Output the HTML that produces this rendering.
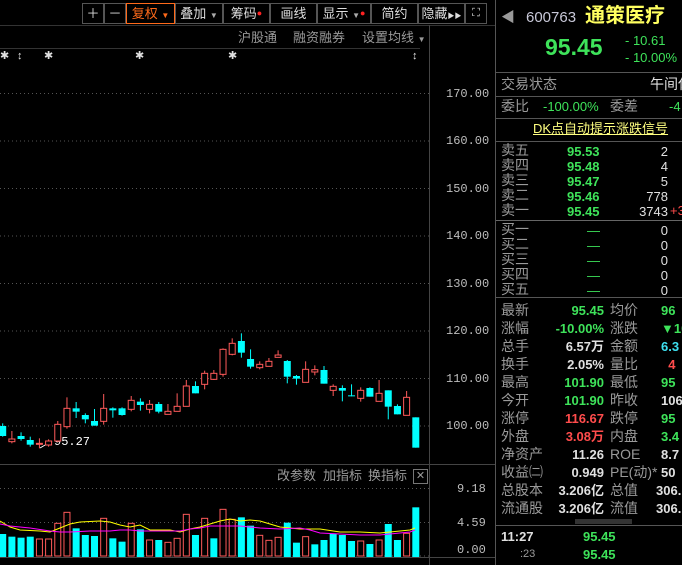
<!DOCTYPE html>
<html><head><meta charset="utf-8"><style>
*{margin:0;padding:0;box-sizing:border-box}
body{width:682px;height:565px;background:#000;overflow:hidden;position:relative;font-family:"Liberation Sans","Noto Sans CJK SC",sans-serif;color:#bdbdbd}
.a{position:absolute;white-space:nowrap;line-height:1}
.g{color:#3ee35a}.r{color:#ff4c4c}.w{color:#e0e0e0}.gy{color:#9a9a9a}
.hl{position:absolute;height:1px;background:#444}
.tb{position:absolute;top:3px;height:21px;border:1px solid #555;font-size:13px;color:#ddd;text-align:center;line-height:19px;white-space:nowrap;overflow:hidden}
</style></head><body>
<!-- toolbar -->
<div class="tb" style="left:82px;width:22px">＋</div>
<div class="tb" style="left:104px;width:22px">－</div>
<div class="tb" style="left:126px;width:49px;border-color:#ff6a1a;color:#ff6a1a">复权 <span style="font-size:8px">▼</span></div>
<div class="tb" style="left:175px;width:48px">叠加 <span style="font-size:8px;color:#aaa">▼</span></div>
<div class="tb" style="left:223px;width:47px">筹码<span style="color:#f22;font-size:9px;vertical-align:top">●</span></div>
<div class="tb" style="left:270px;width:47px">画线</div>
<div class="tb" style="left:317px;width:54px">显示 <span style="font-size:8px;color:#aaa">▼</span><span style="color:#f22;font-size:9px;vertical-align:top">●</span></div>
<div class="tb" style="left:371px;width:47px">简约</div>
<div class="tb" style="left:418px;width:47px">隐藏<span style="font-size:7px">▶▶</span></div>
<div class="tb" style="left:465px;width:22px;font-size:11px">⛶</div>
<div class="hl" style="left:0;top:25px;width:496px;background:#333"></div>
<div class="a gy" style="left:238px;top:31px;font-size:13px">沪股通</div>
<div class="a gy" style="left:293px;top:31px;font-size:13px">融资融券</div>
<div class="a gy" style="left:362px;top:31px;font-size:13px">设置均线 <span style="font-size:8px">▼</span></div>
<div class="hl" style="left:0;top:48px;width:420px;background:#333"></div>
<div class="a w" style="left:0;top:51px;font-size:11px">✱</div>
<div class="a w" style="left:17px;top:51px;font-size:11px">↕</div>
<div class="a w" style="left:44px;top:51px;font-size:11px">✱</div>
<div class="a w" style="left:135px;top:51px;font-size:11px">✱</div>
<div class="a w" style="left:228px;top:51px;font-size:11px">✱</div>
<div class="a w" style="left:412px;top:51px;font-size:11px">↕</div>
<svg width="682" height="565" style="position:absolute;left:0;top:0" id="sv">
<line x1="429.5" y1="25" x2="429.5" y2="565" stroke="#444"/>
<line x1="0" y1="464.5" x2="496" y2="464.5" stroke="#444"/>
<line x1="0" y1="557.5" x2="496" y2="557.5" stroke="#444"/>
<g stroke="#555" stroke-dasharray="1,3">
<line x1="0" y1="93.5" x2="429" y2="93.5"/><line x1="0" y1="141" x2="429" y2="141"/><line x1="0" y1="188.5" x2="429" y2="188.5"/><line x1="0" y1="236" x2="429" y2="236"/><line x1="0" y1="283.5" x2="429" y2="283.5"/><line x1="0" y1="331" x2="429" y2="331"/><line x1="0" y1="378.5" x2="429" y2="378.5"/><line x1="0" y1="426" x2="429" y2="426"/>
<line x1="0" y1="488.5" x2="429" y2="488.5"/><line x1="0" y1="522.5" x2="429" y2="522.5"/><line x1="0" y1="556" x2="429" y2="556"/>
</g>
<g font-family="Liberation Mono,monospace" font-size="12" fill="#bdbdbd">
<text x="446" y="97">170.00</text><text x="446" y="144">160.00</text><text x="446" y="192">150.00</text><text x="446" y="239">140.00</text><text x="446" y="287">130.00</text><text x="446" y="334">120.00</text><text x="446" y="382">110.00</text><text x="446" y="429">100.00</text>
<text x="457" y="492">9.18</text><text x="457" y="526">4.59</text><text x="457" y="553">0.00</text>
<text x="54" y="445" fill="#fff">95.27</text>
</g>
<line x1="40" y1="448" x2="52" y2="441" stroke="#fff"/>
<g id="c"></g>
</svg>
<div class="a gy" style="left:277px;top:469px;font-size:13px">改参数</div>
<div class="a gy" style="left:323px;top:469px;font-size:13px">加指标</div>
<div class="a gy" style="left:368px;top:469px;font-size:13px">换指标</div>
<div class="a gy" style="left:413px;top:469px;width:15px;height:15px;border:1px solid #777;font-size:11px;text-align:center;line-height:13px">✕</div>
<!-- right panel -->
<div style="position:absolute;left:495px;top:0;width:1px;height:565px;background:#555"></div>
<div class="a gy" style="left:501px;top:10px;font-size:14px">◀</div>
<div class="a" style="left:526px;top:10px;font-size:15px;color:#c8c8d8">600763</div>
<div class="a" style="left:585px;top:6px;font-size:20px;font-weight:bold;color:#ffff60">通策医疗</div>
<div class="a g" style="left:545px;top:36px;font-size:23px;font-weight:bold">95.45</div>
<div class="a g" style="left:625px;top:34px;font-size:13px">- 10.61</div>
<div class="a g" style="left:625px;top:51px;font-size:13px">- 10.00%</div>
<div class="hl" style="left:496px;top:72px;width:186px;background:#555"></div>
<div class="a gy" style="left:501px;top:77px;font-size:14px">交易状态</div>
<div class="a w" style="left:650px;top:77px;font-size:14px">午间休</div>
<div class="hl" style="left:496px;top:96px;width:186px;background:#555"></div>
<div class="a gy" style="left:501px;top:99px;font-size:14px">委比</div>
<div class="a g" style="left:543px;top:100px;font-size:13px">-100.00%</div>
<div class="a gy" style="left:610px;top:99px;font-size:14px">委差</div>
<div class="a g" style="left:669px;top:100px;font-size:13px">-4</div>
<div class="hl" style="left:496px;top:118px;width:186px;background:#555"></div>
<div class="a" style="left:533px;top:122px;font-size:13px;color:#ffff80;text-decoration:underline">DK点自动提示涨跌信号</div>
<div class="hl" style="left:496px;top:141px;width:186px;background:#555"></div>
<div style="position:absolute;left:501px;top:143px;font-size:14px;line-height:15px" class="gy">卖五<br>卖四<br>卖三<br>卖二<br>卖一</div>
<div style="position:absolute;left:567px;top:144px;font-size:13px;line-height:15px;font-weight:bold" class="g">95.53<br>95.48<br>95.47<br>95.46<br>95.45</div>
<div style="position:absolute;left:630px;top:144px;width:38px;text-align:right;font-size:13px;line-height:15px" class="w">2<br>4<br>5<br>778<br>3743</div>
<div class="a r" style="left:670px;top:204px;font-size:13px">+3</div>
<div class="hl" style="left:496px;top:220px;width:186px;background:#666"></div>
<div style="position:absolute;left:501px;top:222px;font-size:14px;line-height:15px" class="gy">买一<br>买二<br>买三<br>买四<br>买五</div>
<div style="position:absolute;left:587px;top:223px;font-size:13px;line-height:15px" class="g">—<br>—<br>—<br>—<br>—</div>
<div style="position:absolute;left:630px;top:223px;width:38px;text-align:right;font-size:13px;line-height:15px" class="w">0<br>0<br>0<br>0<br>0</div>
<div class="hl" style="left:496px;top:297px;width:186px;background:#555"></div>
<div style="position:absolute;left:501px;top:301px;font-size:14px;line-height:18px" class="gy">最新<br>涨幅<br>总手<br>换手<br>最高<br>今开<br>涨停<br>外盘<br>净资产<br>收益㈡<br>总股本<br>流通股</div>
<div style="position:absolute;left:530px;top:302px;width:74px;text-align:right;font-size:13px;line-height:18px;font-weight:bold">
<span class="g">95.45</span><br><span class="g">-10.00%</span><br><span class="w">6.57万</span><br><span class="w">2.05%</span><br><span class="g">101.90</span><br><span class="g">101.90</span><br><span class="r">116.67</span><br><span class="r">3.08万</span><br><span class="w">11.26</span><br><span class="w">0.949</span><br><span class="w">3.206亿</span><br><span class="w">3.206亿</span></div>
<div style="position:absolute;left:610px;top:301px;font-size:14px;line-height:18px" class="gy">均价<br>涨跌<br>金额<br>量比<br>最低<br>昨收<br>跌停<br>内盘<br>ROE<br>PE(动)*<br>总值<br>流值</div>
<div style="position:absolute;left:661px;top:302px;font-size:13px;line-height:18px;font-weight:bold;white-space:nowrap">
<span class="g">96</span><br><span class="g">▼10</span><br><span style="color:#3ee0f0">6.3</span><br><span class="r">&nbsp;&nbsp;4</span><br><span class="g">95</span><br><span class="w">106</span><br><span class="g">95</span><br><span class="g">3.4</span><br><span class="w">8.7</span><br><span class="w">50</span><br><span class="w" style="margin-left:-5px">306.</span><br><span class="w" style="margin-left:-5px">306.</span></div>
<div style="position:absolute;left:575px;top:519px;width:57px;height:5px;background:#333"></div>
<div class="hl" style="left:496px;top:525px;width:186px;background:#555"></div>
<div class="a w" style="left:501px;top:530px;font-size:13px;font-weight:bold">11:27</div>
<div class="a g" style="left:583px;top:530px;font-size:13px;font-weight:bold">95.45</div>
<div class="a gy" style="left:520px;top:549px;font-size:11px">:23</div>
<div class="a g" style="left:583px;top:548px;font-size:13px;font-weight:bold">95.45</div>
<script>
var C=[['c',318,348,310,350],['r',357,365,333,370],['c',348,357,337,362],['c',360,374,350,380],['r',370,373,355,385],['r',363,375,358,380],['r',313,363,303,366],['r',265,320,232,326],['c',265,275,246,294],['c',285,298,280,310],['c',303,317,267,317],['r',265,304,222,314],['c',265,271,262,293],['c',265,285,262,287],['r',241,268,228,274],['c',245,255,235,272],['r',253,268,240,280],['c',252,275,246,280],['r',274,283,252,283],['r',259,274,220,274],['r',198,259,180,259],['c',198,220,184,220],['r',160,193,152,208],['r',160,178,150,180],['r',88,163,85,170],['r',70,103,55,106],['c',63,98,40,113],['c',117,140,88,146],['r',133,143,124,148],['r',124,139,114,139],['r',105,112,91,112],['c',123,170,120,190],['c',168,176,165,194],['r',148,187,124,187],['r',149,156,136,166],['c',150,191,138,191],['r',199,211,193,228],['c',204,212,196,244],['c',226,229,193,229],['r',211,235,202,245],['c',204,230,202,230],['r',220,244,180,244],['c',211,260,211,298],['c',258,283,253,283],['r',232,286,213,286],['c',292,383,292,383]];
var V=[642,650,653,650,657,657,610,577,625,645,648,595,655,665,610,628,660,660,667,655,583,645,595,655,568,598,592,617,646,661,652,608,668,650,673,660,642,645,663,663,672,660,612,660,640,562];
var VC2=['c','c','c','c','r','r','r','r','c','c','c','r','c','c','r','c','r','c','r','r','r','c','r','c','r','r','c','c','r','r','r','c','c','r','c','c','c','c','c','r','c','r','c','c','r','c'];
var s='',R='#ff5a5a',B='#00ffff';
function Y(z){return 320+z/3}
for(var i=0;i<46;i++){var x=2.7+i*9.18,c=C[i],col=c[0]=='r'?R:B;
s+='<line x1="'+x+'" x2="'+x+'" y1="'+Y(c[3])+'" y2="'+Y(c[4])+'" stroke="'+col+'"/>';
var t=Y(c[1]),h=Math.max(1,Y(c[2])-t);
if(c[0]=='r')s+='<rect x="'+(x-3)+'" y="'+t+'" width="6" height="'+h+'" fill="#000" stroke="'+R+'"/>';
else s+='<rect x="'+(x-3.5)+'" y="'+t+'" width="7" height="'+h+'" fill="'+B+'"/>';
var vt=Y(V[i]),vc=VC2[i];
if(vc=='r')s+='<rect x="'+(x-3)+'" y="'+vt+'" width="6" height="'+(556-vt)+'" fill="none" stroke="'+R+'"/>';
else s+='<rect x="'+(x-3.5)+'" y="'+vt+'" width="7" height="'+(557-vt)+'" fill="'+B+'"/>';}
s+='<polyline fill="none" stroke="#ffff00" points="0,521 10,527 20,530 40,531 50,532 60,528 70,524 80,522 100,521 110,522 120,525 130,527 140,525 150,530 170,530 180,532 190,529 200,527 210,524 220,521 230,519 240,521 250,520 260,521 270,524 280,527 290,528 300,529 320,529 340,532 360,532 380,533 400,531 410,530 415,528"/>';
s+='<polyline fill="none" stroke="#ff00ff" points="0,524 10,526 30,528 50,531 60,532 70,532 90,531 110,531 120,530 130,530 140,531 150,531 170,531 180,531 190,529 200,528 210,526 220,526 240,526 260,528 280,529 300,528 310,530 320,533 340,534 360,535 380,535 400,533 410,532 415,530"/>';
document.getElementById('c').innerHTML=s;
</script>
</body></html>
